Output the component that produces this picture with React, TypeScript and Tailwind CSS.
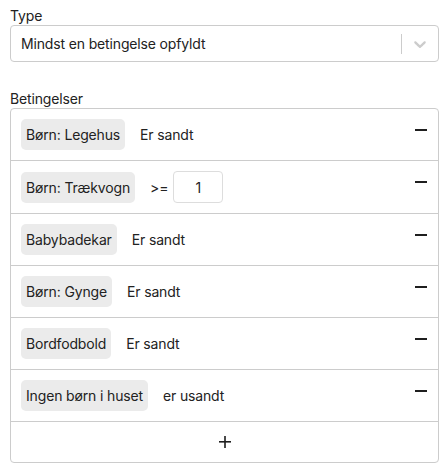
import React from 'react'

const rows: { name: string; op: string; value?: string }[] = [
  { name: 'Børn: Legehus', op: 'Er sandt' },
  { name: 'Børn: Trækvogn', op: '>=', value: '1' },
  { name: 'Babybadekar', op: 'Er sandt' },
  { name: 'Børn: Gynge', op: 'Er sandt' },
  { name: 'Bordfodbold', op: 'Er sandt' },
  { name: 'Ingen børn i huset', op: 'er usandt' }
]

function Minus() {
  return (
    <svg width="12" height="12" viewBox="0 0 12 12" className="text-[#1f1f1f]">
      <rect x="0" y="5" width="12" height="2" fill="currentColor" />
    </svg>
  )
}

export default function App(): React.ReactElement {
  return (
    <div
      className="w-[446px] h-[474px] bg-white pt-[7px] pl-[10px] text-[14px] text-[#222] tracking-[-0.15px]"
      style={{ fontFamily: 'Inter, "Noto Sans", sans-serif' }}
    >
      <div className="w-[429px]">
        <div className="leading-[17px] mb-[1px]">Type</div>
        <div className="h-[37px] border border-[#cccccc] rounded-[4px] flex items-center">
          <div className="flex-1 pl-[10px]">Mindst en betingelse opfyldt</div>
          <div className="w-px h-[20px] bg-[#cccccc]" />
          <div className="w-[36px] flex justify-center text-[#cccccc]">
            <svg width="20" height="20" viewBox="0 0 20 20" fill="currentColor">
              <path d="M4.516 7.548c0.436-0.446 1.043-0.481 1.576 0l3.908 3.747 3.908-3.747c0.533-0.481 1.141-0.446 1.574 0 0.436 0.445 0.408 1.197 0 1.615-0.406 0.418-4.695 4.502-4.695 4.502-0.217 0.223-0.502 0.335-0.787 0.335s-0.57-0.112-0.789-0.335c0 0-4.287-4.084-4.695-4.502s-0.436-1.170 0-1.615z" />
            </svg>
          </div>
        </div>

        <div className="mt-[28px] leading-[17px] mb-[1px]">Betingelser</div>
        <div className="border border-[#cccccc] rounded-[4px]">
          {rows.map((r) => (
            <div
              key={r.name}
              className="flex items-center px-[10px] py-[10px] border-b border-[#cccccc]"
            >
              <div className="h-[31px] px-[5px] rounded-[5px] bg-[#ebebeb] flex items-center">
                {r.name}
              </div>
              <div className="ml-[15px]">{r.op}</div>
              {r.value && (
                <div className="ml-[5px] w-[50px] h-[32px] border border-[#dddddd] rounded-[4px] flex items-center justify-center">
                  {r.value}
                </div>
              )}
              <div className="ml-auto self-start mt-[5px] mr-[1px]">
                <Minus />
              </div>
            </div>
          ))}
          <div className="h-[40px] flex items-center justify-center">
            <svg width="12" height="12" viewBox="0 0 12 12" className="text-[#1f1f1f]">
              <rect x="0" y="5" width="12" height="1.6" fill="currentColor" />
              <rect x="5.2" y="0" width="1.6" height="12" fill="currentColor" />
            </svg>
          </div>
        </div>
      </div>
    </div>
  )
}
